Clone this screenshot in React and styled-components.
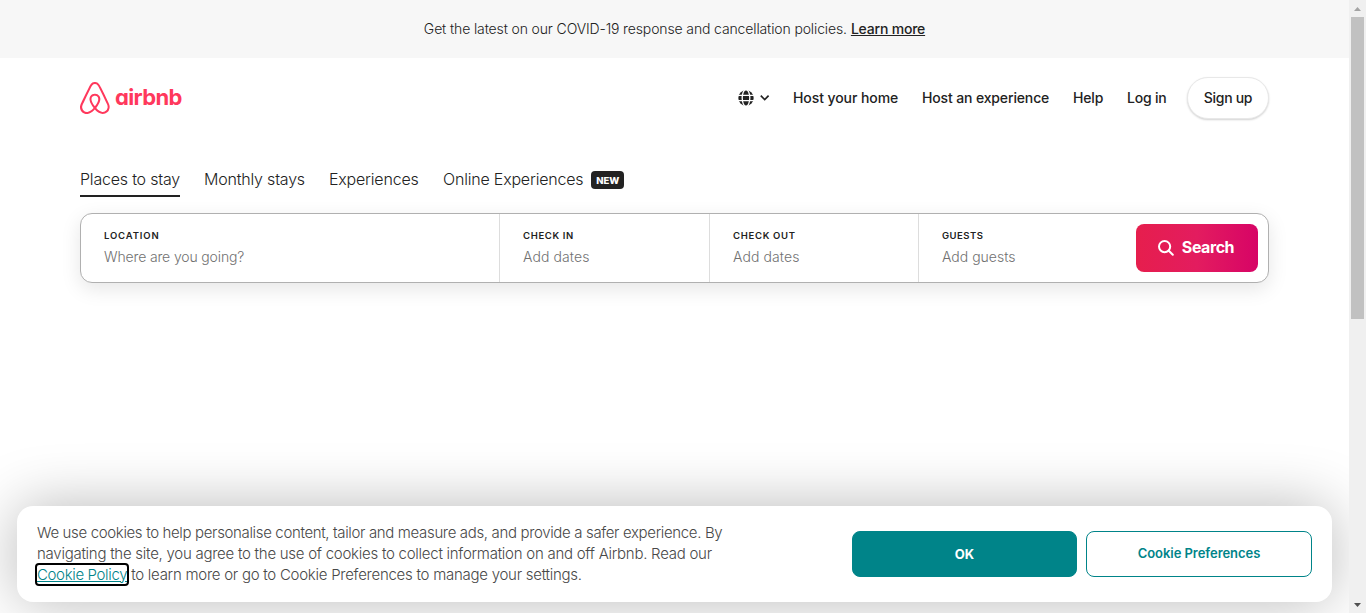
import React from 'react';
import styled, { createGlobalStyle } from 'styled-components';

const GlobalStyle = createGlobalStyle`
  *, *::before, *::after { box-sizing: border-box; }
  body {
    margin: 0;
    overflow: hidden;
    background: #fff;
    color: #222;
    font-family: Inter, "Liberation Sans", sans-serif;
  }
  a { color: inherit; }
  button { font-family: inherit; margin: 0; cursor: pointer; }
`;

const Window = styled.div`
  display: flex;
  width: 100%;
  height: 613px;
  overflow: hidden;
`;

const Page = styled.div`
  position: relative;
  flex: 1;
  overflow: hidden;
`;

const Label = styled.span`
  white-space: nowrap;
  letter-spacing: ${(p) => p.$track || 0}px;
`;

const Notice = styled.div`
  display: flex;
  align-items: center;
  justify-content: center;
  gap: 4px;
  height: 58px;
  background: #f7f7f7;
  font-size: 14px;
  font-weight: 300;
  line-height: 18px;
`;

const NoticeLink = styled.a`
  font-weight: 500;
  white-space: nowrap;
  letter-spacing: ${(p) => p.$track || 0}px;
  text-decoration: underline;
`;

const Header = styled.header`
  display: flex;
  align-items: center;
  justify-content: space-between;
  height: 80px;
  padding: 0 80px;
`;

const Brand = styled.a`
  display: flex;
  align-items: center;
  gap: 5px;
  color: #ff385c;
  text-decoration: none;
`;

const Wordmark = styled.span`
  padding-bottom: 2px;
  font-size: 22px;
  font-weight: 700;
  line-height: 30px;
  letter-spacing: -0.65px;
  font-feature-settings: "cv11" 1;
`;

const Nav = styled.nav`
  display: flex;
  align-items: center;
  font-size: 14px;
  font-weight: 500;
`;

const Locale = styled.div`
  display: flex;
  align-items: center;
  gap: 6px;
  margin-right: 23px;
`;

const NavLink = styled.a`
  width: ${(p) => p.$w}px;
  margin-right: ${(p) => p.$gap || 24}px;
  padding-bottom: 2px;
  white-space: nowrap;
  letter-spacing: ${(p) => p.$track || 0}px;
  text-decoration: none;
`;

const SignUp = styled.button`
  width: 82px;
  height: 42px;
  padding: 0 0 2px;
  border: 1px solid #e8e8e8;
  border-radius: 21px;
  background: #fff;
  box-shadow: 0 1px 2px rgba(0, 0, 0, 0.18);
  color: #222;
  font-size: 14px;
  font-weight: 500;
  letter-spacing: -0.3px;
`;

const Main = styled.main`
  padding: 25px 80px 0;
`;

const Tabs = styled.div`
  display: flex;
  gap: 24px;
  height: 34px;
  font-size: 16px;
  font-weight: 300;
  line-height: 34px;
`;

const Tab = styled.div`
  display: flex;
  align-items: center;
  gap: 8px;
  width: ${(p) => p.$w}px;
  border-bottom: 2px solid ${(p) => (p.$active ? '#222' : 'transparent')};
`;

const Badge = styled.span`
  flex: none;
  width: 33px;
  height: 18px;
  margin-top: 2px;
  border-radius: 4px;
  background: #222;
  color: #fff;
  font-size: 9.5px;
  font-weight: 800;
  line-height: 19px;
  text-align: center;
`;

const SearchBar = styled.div`
  display: flex;
  align-items: stretch;
  height: 70px;
  margin-top: 16px;
  border: 1px solid #b0b0b0;
  border-radius: 12px;
  background: #fff;
  box-shadow: 0 6px 20px rgba(0, 0, 0, 0.1);
`;

const Field = styled.div`
  display: flex;
  flex-direction: column;
  width: ${(p) => p.$w}px;
  padding: 15px 0 0 23px;
  border-right: ${(p) => (p.$last ? 'none' : '1px solid #ddd')};
`;

const FieldName = styled.div`
  font-size: 9.5px;
  font-weight: 600;
  line-height: 14px;
  letter-spacing: ${(p) => p.$track}px;
`;

const FieldValue = styled.div`
  margin-top: 4px;
  color: #717171;
  font-size: 14px;
  font-weight: 300;
  line-height: 20px;
  letter-spacing: ${(p) => p.$track}px;
`;

const SearchButton = styled.button`
  display: flex;
  align-items: center;
  justify-content: center;
  gap: 8px;
  width: 122px;
  height: 48px;
  margin: 10px 10px 0 auto;
  padding: 0 2px 0 0;
  border: 0;
  border-radius: 8px;
  background: linear-gradient(90deg, #e61e4d 0%, #e31c5f 50%, #d70466 100%);
  color: #fff;
  font-size: 16px;
  font-weight: 650;
  letter-spacing: -0.45px;
`;

const SearchText = styled.span`
  padding-bottom: 2px;
`;

const CookieBanner = styled.aside`
  position: absolute;
  left: 17px;
  right: 17px;
  bottom: 11px;
  display: flex;
  align-items: center;
  justify-content: space-between;
  height: 96px;
  padding: 0 20px;
  border-radius: 16px;
  background: #fff;
  box-shadow: 0 0 60px rgba(0, 0, 0, 0.28);
`;

const CookieText = styled.div`
  display: flex;
  flex-direction: column;
  padding-bottom: 2px;
  color: #484848;
  font-size: 15px;
  font-weight: 300;
  line-height: 21px;
`;

const PolicyLink = styled.a`
  color: #008489;
  letter-spacing: -0.35px;
  outline: 2px solid #000;
  outline-offset: 0;
  border-radius: 2px;
  text-decoration: underline;
`;

const CookieActions = styled.div`
  display: flex;
  gap: 9px;
`;

const CookieButton = styled.button`
  width: ${(p) => p.$w}px;
  height: 46px;
  padding: 0 0 ${(p) => (p.$primary ? 0 : 2)}px;
  border: 1px solid #008489;
  border-radius: 8px;
  background: ${(p) => (p.$primary ? '#008489' : '#fff')};
  color: ${(p) => (p.$primary ? '#fff' : '#008489')};
  font-size: 13px;
  font-weight: ${(p) => (p.$primary ? 700 : 600)};
  letter-spacing: ${(p) => p.$track || 0}px;
`;

const ScrollTrack = styled.div`
  display: flex;
  flex-direction: column;
  align-items: center;
  width: 17px;
  background: #f0f0f0;
`;

const ScrollArrow = styled.div`
  display: flex;
  align-items: center;
  justify-content: center;
  height: 17px;
`;

const ScrollThumb = styled.div`
  width: 13px;
  height: 302px;
  margin-bottom: auto;
  background: #c1c1c1;
`;

const BrandIcon = () => (
  <svg width="30" height="32" viewBox="0 0 30 32" fill="currentColor">
    <path d="M29.24 22.68c-.16-.39-.31-.8-.47-1.15l-.74-1.67-.03-.03c-2.2-4.8-4.55-9.68-7.04-14.48l-.1-.2c-.25-.47-.5-.99-.76-1.47-.32-.57-.63-1.18-1.14-1.76a5.3 5.3 0 00-8.2 0c-.47.58-.82 1.19-1.14 1.76-.25.52-.5 1.03-.76 1.5l-.1.2c-2.45 4.8-4.84 9.68-7.04 14.48l-.06.06c-.22.52-.48 1.06-.73 1.64-.16.35-.32.73-.48 1.15a6.8 6.8 0 007.2 9.23 8.38 8.38 0 003.18-1.1c1.3-.73 2.55-1.79 3.95-3.32 1.4 1.53 2.68 2.59 3.95 3.33A8.38 8.38 0 0022.75 32a6.79 6.79 0 006.75-5.83 5.94 5.94 0 00-.26-3.5zm-14.36 1.66c-1.72-2.2-2.84-4.22-3.22-5.95a5.2 5.2 0 01-.1-1.96c.07-.51.26-.96.52-1.34.6-.87 1.65-1.41 2.8-1.41a3.3 3.3 0 012.8 1.4c.26.4.45.84.51 1.35.1.58.06 1.25-.1 1.96-.38 1.7-1.5 3.74-3.21 5.95zm12.74 1.48a4.76 4.76 0 01-2.9 3.75c-.76.32-1.6.41-2.42.32-.8-.1-1.6-.36-2.42-.84a15.64 15.64 0 01-3.63-3.1c2.1-2.6 3.37-4.97 3.85-7.08.23-1 .26-1.9.16-2.73a5.53 5.53 0 00-.86-2.2 5.36 5.36 0 00-4.49-2.28c-1.85 0-3.5.86-4.5 2.27a5.18 5.18 0 00-.85 2.21c-.13.84-.1 1.77.16 2.73.48 2.11 1.78 4.51 3.85 7.1a14.33 14.33 0 01-3.63 3.12c-.83.48-1.62.73-2.42.83a4.76 4.76 0 01-5.32-4.07c-.1-.8-.03-1.6.29-2.5.1-.32.25-.64.41-1.02.22-.52.48-1.06.73-1.6l.04-.07c2.16-4.77 4.52-9.64 6.97-14.41l.1-.2c.25-.48.5-.99.76-1.47.26-.51.54-1 .9-1.4a3.32 3.32 0 015.09 0c.35.4.64.89.9 1.4.25.48.5 1 .76 1.47l.1.2c2.44 4.77 4.8 9.64 7 14.41l.03.03c.26.52.48 1.1.73 1.6.16.39.32.7.42 1.03.19.9.29 1.7.19 2.5z" />
  </svg>
);

const GlobeIcon = () => (
  <svg width="16" height="16" viewBox="0 0 16 16">
    <circle cx="8" cy="8" r="7.7" fill="#222" />
    <g fill="none" stroke="#fff" strokeWidth="1.3">
      <ellipse cx="8" cy="8" rx="3.8" ry="8.4" />
      <path d="M0 5.4h16M0 10.6h16" />
    </g>
  </svg>
);

const ChevronIcon = () => (
  <svg width="10" height="6" viewBox="0 0 10 6" fill="none" stroke="#222" strokeWidth="1.7">
    <path d="M.8.7L4.7 4.6 8.6.7" />
  </svg>
);

const SearchIcon = () => (
  <svg width="16" height="16" viewBox="0 0 16 16" fill="none" stroke="#fff" strokeWidth="2" strokeLinecap="round">
    <circle cx="6.6" cy="6.6" r="5.6" />
    <path d="M10.8 10.8L14.8 14.8" />
  </svg>
);

const fields = [
  { name: 'LOCATION', value: 'Where are you going?', w: 419, nt: 0.85, vt: -0.14 },
  { name: 'CHECK IN', value: 'Add dates', w: 210, nt: 0.65, vt: 0.1 },
  { name: 'CHECK OUT', value: 'Add dates', w: 209, nt: 0.7, vt: 0.1 },
  { name: 'GUESTS', value: 'Add guests', w: 200, nt: 0.5, vt: 0, last: true },
];

export default function App() {
  return (
    <Window>
      <GlobalStyle />
      <Page>
        <Notice>
          <Label $track={-0.13}>Get the latest on our COVID-19 response and cancellation policies.</Label>
          <NoticeLink $track={-0.2}>Learn more</NoticeLink>
        </Notice>
        <Header>
          <Brand>
            <BrandIcon />
            <Wordmark>airbnb</Wordmark>
          </Brand>
          <Nav>
            <Locale>
              <GlobeIcon />
              <ChevronIcon />
            </Locale>
            <NavLink $w={105} $track={-0.08}>Host your home</NavLink>
            <NavLink $w={127} $track={-0.14}>Host an experience</NavLink>
            <NavLink $w={30} $track={-0.15}>Help</NavLink>
            <NavLink $w={40} $gap={20} $track={-0.2}>Log in</NavLink>
            <SignUp>Sign up</SignUp>
          </Nav>
        </Header>
        <Main>
          <Tabs>
            <Tab $w={100} $active><Label $track={-0.2}>Places to stay</Label></Tab>
            <Tab $w={101}><Label $track={-0.2}>Monthly stays</Label></Tab>
            <Tab $w={90}><Label $track={-0.2}>Experiences</Label></Tab>
            <Tab $w={181}><Label $track={-0.2}>Online Experiences</Label><Badge>NEW</Badge></Tab>
          </Tabs>
          <SearchBar>
            {fields.map((f) => (
              <Field key={f.name} $w={f.w} $last={f.last}>
                <FieldName $track={f.nt}>{f.name}</FieldName>
                <FieldValue $track={f.vt}>{f.value}</FieldValue>
              </Field>
            ))}
            <SearchButton><SearchIcon /><SearchText>Search</SearchText></SearchButton>
          </SearchBar>
        </Main>
        <CookieBanner>
          <CookieText>
            <Label $track={-0.35}>We use cookies to help personalise content, tailor and measure ads, and provide a safer experience. By</Label>
            <Label $track={-0.26}>navigating the site, you agree to the use of cookies to collect information on and off Airbnb. Read our</Label>
            <Label $track={-0.26}><PolicyLink>Cookie Policy</PolicyLink> to learn more or go to Cookie Preferences to manage your settings.</Label>
          </CookieText>
          <CookieActions>
            <CookieButton $w={225} $primary>OK</CookieButton>
            <CookieButton $w={226} $track={-0.05}>Cookie Preferences</CookieButton>
          </CookieActions>
        </CookieBanner>
      </Page>
      <ScrollTrack>
        <ScrollArrow>
          <svg width="7" height="4" viewBox="0 0 7 4"><path d="M0 4L3.5 0 7 4z" fill="#a3a3a3" /></svg>
        </ScrollArrow>
        <ScrollThumb />
        <ScrollArrow>
          <svg width="7" height="4" viewBox="0 0 7 4"><path d="M0 0h7L3.5 4z" fill="#505050" /></svg>
        </ScrollArrow>
      </ScrollTrack>
    </Window>
  );
}
